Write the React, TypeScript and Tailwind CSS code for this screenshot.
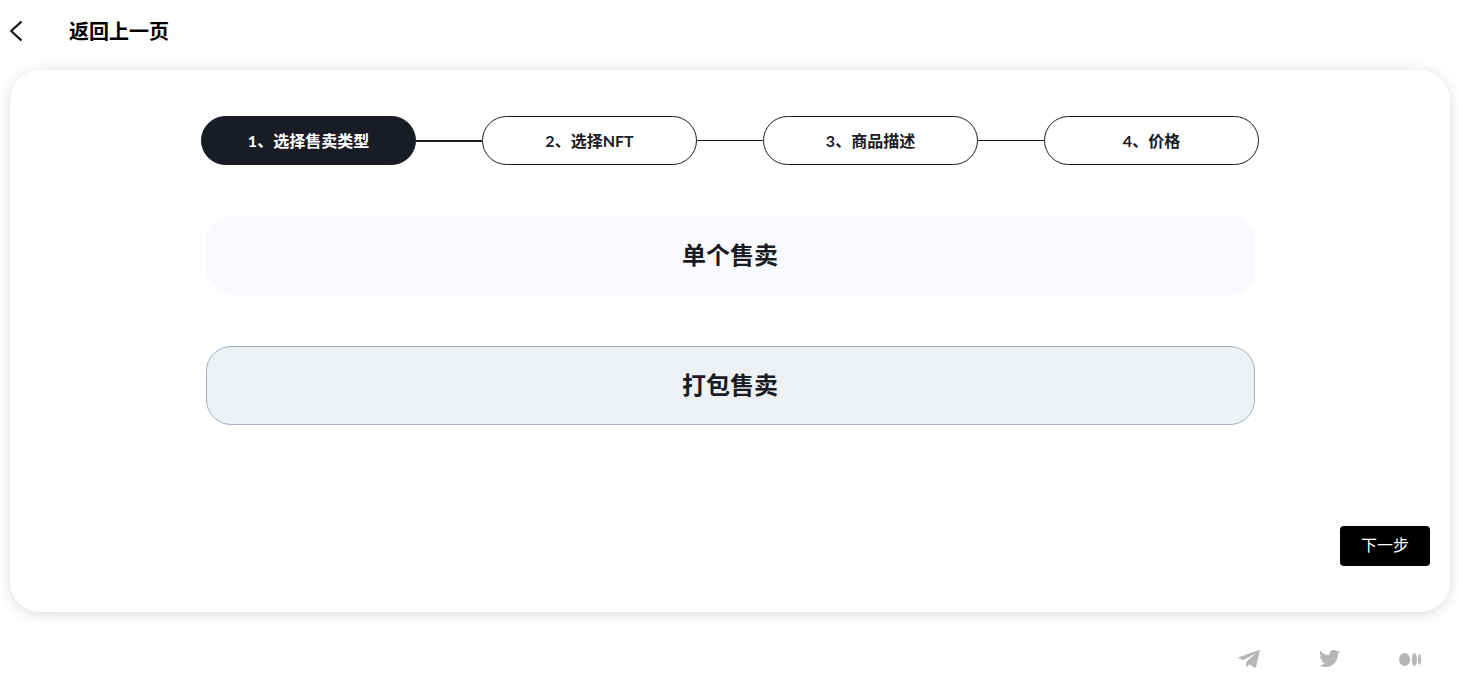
import { Fragment, useState } from "react";
import { FaTwitter } from "react-icons/fa";

const steps = ["1、选择售卖类型", "2、选择NFT", "3、商品描述", "4、价格"];
const options = ["单个售卖", "打包售卖"];

function TelegramIcon() {
  return (
    <svg width="22" height="20" viewBox="0 0 22 20" fill="currentColor" aria-hidden="true">
      <path d="M21.6 0.8 L0.7 8.3 Q0 8.8 0.7 9.3 L5.8 10.9 L17.8 3.9 L8.1 13.2 L8.1 17.6 Q8.3 18.3 8.9 17.8 L11.5 15.3 L16.9 18.7 Q17.8 19 18.1 18 L21.8 1.3 Q21.9 0.8 21.6 0.8 Z" />
    </svg>
  );
}

function TwitterIcon() {
  return <FaTwitter size={21} aria-hidden="true" />;
}

function MediumIcon() {
  return (
    <svg width="22" height="20" viewBox="0 0 22 20" fill="currentColor" aria-hidden="true">
      <ellipse cx="5.6" cy="10.5" rx="5.6" ry="6.5" />
      <ellipse cx="15.4" cy="10.5" rx="2.6" ry="6.5" />
      <ellipse cx="20.5" cy="10.5" rx="1.5" ry="5.2" />
    </svg>
  );
}

const links = [
  { label: "Telegram", icon: TelegramIcon },
  { label: "Twitter", icon: TwitterIcon },
  { label: "Medium", icon: MediumIcon },
];

export default function App() {
  const [selected, setSelected] = useState(1);
  const current = 0;

  return (
    <div className="min-h-screen bg-white pr-[9px] pl-2.5 font-['Lato','Noto_Sans_CJK_SC',sans-serif] text-[#191c24]">
      <header className="flex h-[70px] items-center pb-2">
        <a href="#back" className="flex items-center gap-[47px] text-xl font-bold text-black">
          <svg width="12" height="20" viewBox="0 0 12 20" fill="none" stroke="#191c24" strokeWidth="2.3" strokeLinecap="round" strokeLinejoin="round" aria-hidden="true">
            <path d="M10.8 1.2 L1.2 10 L10.8 18.8" />
          </svg>
          返回上一页
        </a>
      </header>

      <main className="flex min-h-[542px] flex-col rounded-[30px] bg-white px-5 py-[46px] shadow-[0_2px_14px_0_rgba(0,0,0,0.14)]">
        <ol className="mx-auto flex w-full max-w-[1058px] items-center">
          {steps.map((step, i) => (
            <Fragment key={step}>
              {i > 0 && (
                <li
                  aria-hidden="true"
                  className={i - 1 === current ? "h-0.5 flex-1 bg-[#191c24]" : "h-px flex-1 bg-[#191c24]"}
                />
              )}
              <li
                aria-current={i === current ? "step" : undefined}
                className={
                  i === current
                    ? "flex h-[49px] w-[215px] items-center justify-center rounded-full border border-[#191c24] bg-[#191c24] text-base font-bold text-white"
                    : "flex h-[49px] w-[215px] items-center justify-center rounded-full border border-[#191c24] bg-white text-base font-bold"
                }
              >
                {step}
              </li>
            </Fragment>
          ))}
        </ol>

        <div className="mx-auto mt-[51px] flex w-full max-w-[1049px] flex-col gap-[51px]">
          {options.map((option, i) => (
            <button
              key={option}
              type="button"
              aria-pressed={i === selected}
              onClick={() => setSelected(i)}
              className={
                i === selected
                  ? "h-[79px] rounded-[25px] border border-[#a3b0c6] bg-[#edf1f4] pb-0.5 text-2xl font-bold"
                  : "h-[79px] rounded-[25px] border border-[#f9faff] bg-[#f9faff] pb-0.5 text-2xl font-bold"
              }
            >
              {option}
            </button>
          ))}
        </div>

        <div className="mt-auto flex justify-end">
          <button type="button" className="h-10 rounded bg-black px-[21px] pb-0.5 text-base text-white">
            下一步
          </button>
        </div>
      </main>

      <footer className="flex items-center justify-end gap-[59px] pt-9 pr-[29px]">
        {links.map(({ label, icon: Icon }) => (
          <a key={label} href="#social" aria-label={label} className="text-[#b5b5b5]">
            <Icon />
          </a>
        ))}
      </footer>
    </div>
  );
}
